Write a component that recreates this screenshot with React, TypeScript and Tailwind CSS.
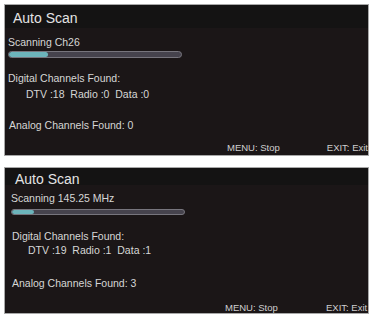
import React from "react";

type P = {
  scan: string;
  fill: number;
  dtv: string;
  radio: string;
  data: string;
  analog: string;
  box: string;
  head: string;
  scanCls: string;
  barCls: string;
  digCls: string;
  dtvCls: string;
  anCls: string;
  footCls: string;
  menuCls: string;
};

function Panel(p: P) {
  return (
    <div
      className={`relative ${p.box} w-[365px] bg-[#1b1617] border border-[#a8a8a8] text-[#d6d6d6] flex flex-col overflow-hidden`}
      style={{ fontFamily: '"Liberation Sans", Arial, sans-serif' }}
    >
      <div className={`${p.head} bg-[#141313] text-[14px] leading-none text-[#e4e4e4]`}>Auto Scan</div>
      <div className={`${p.scanCls} text-[10.5px] leading-none`}>{p.scan}</div>
      <div className={`${p.barCls} w-[174px] rounded-full border border-[#77757d] bg-[#46434d] overflow-hidden`}>
        <div className="h-full bg-[#6cb4bb] rounded-full" style={{ width: p.fill }} />
      </div>
      <div className={`${p.digCls} text-[10.5px] leading-none`}>Digital Channels Found:</div>
      <div className={`${p.dtvCls} text-[10.5px] leading-none whitespace-pre`}>{`DTV :${p.dtv}  Radio :${p.radio}  Data :${p.data}`}</div>
      <div className={`${p.anCls} text-[10.5px] leading-none`}>Analog Channels Found: {p.analog}</div>
      <div className={`absolute bottom-0 left-0 right-0 ${p.footCls} flex items-center text-[9.5px] leading-none text-[#cfcfcf] whitespace-nowrap`}>
        <span className={`${p.menuCls} w-[101px]`}>MENU: Stop</span>
        <span>EXIT: Exit</span>
      </div>
    </div>
  );
}

export default function App() {
  return (
    <div className="w-[370px] h-[314px] bg-white pt-[4px] pl-[4px] flex flex-col gap-[11px]">
      <Panel
        box="h-[152px]"
        head="h-[23px] pt-[6px] pl-[8px]"
        scanCls="pt-[9px] pl-[3px]"
        barCls="mt-[3px] ml-[3px] h-[7px]"
        digCls="mt-[15px] pl-[3px]"
        dtvCls="mt-[5.5px] pl-[21px]"
        anCls="mt-[20.5px] pl-[4px]"
        footCls="h-[15px]"
        menuCls="ml-[222px]"
        scan="Scanning Ch26"
        fill={39}
        dtv="18"
        radio="0"
        data="0"
        analog="0"
      />
      <Panel
        box="h-[147px]"
        head="h-[17px] pt-[4px] pl-[10px]"
        scanCls="pt-[8px] pl-[6px]"
        barCls="mt-[5px] ml-[6px] h-[6px]"
        digCls="mt-[16px] pl-[7px]"
        dtvCls="mt-[3.5px] pl-[23px]"
        anCls="mt-[22.5px] pl-[7px]"
        footCls="h-[11px]"
        menuCls="ml-[220px]"
        scan="Scanning 145.25 MHz"
        fill={22}
        dtv="19"
        radio="1"
        data="1"
        analog="3"
      />
    </div>
  );
}
